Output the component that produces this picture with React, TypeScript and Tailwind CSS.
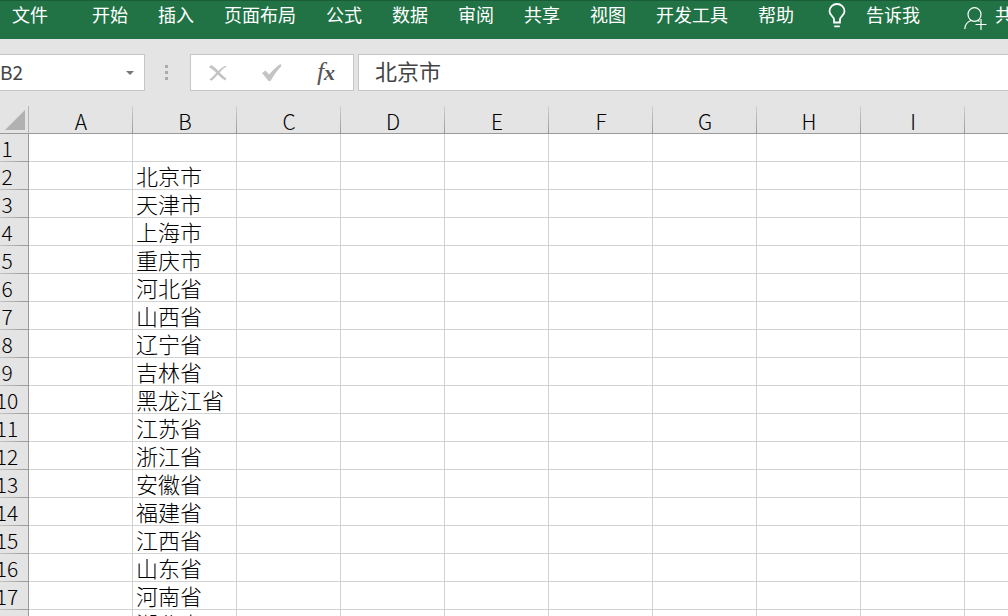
const TABS = [
  "开始",
  "插入",
  "页面布局",
  "公式",
  "数据",
  "审阅",
  "共享",
  "视图",
  "开发工具",
  "帮助",
];

const COLUMNS = ["A", "B", "C", "D", "E", "F", "G", "H", "I", ""];

const PROVINCES = [
  "",
  "北京市",
  "天津市",
  "上海市",
  "重庆市",
  "河北省",
  "山西省",
  "辽宁省",
  "吉林省",
  "黑龙江省",
  "江苏省",
  "浙江省",
  "安徽省",
  "福建省",
  "江西省",
  "山东省",
  "河南省",
  "湖北省",
];

export default function App() {
  return (
    <div className="flex h-screen flex-col overflow-hidden bg-[#e4e4e4] font-['Noto_Sans_CJK_SC',sans-serif] text-black">
      <Ribbon />
      <FormulaBar />
      <Sheet />
    </div>
  );
}

function Ribbon() {
  return (
    <nav className="flex h-[39px] shrink-0 items-start overflow-hidden border-t border-[#1a5c38] bg-[#217346] pl-3 text-[18px] leading-[26px] whitespace-nowrap text-white">
      <button className="mr-11 shrink-0">文件</button>
      <div className="flex shrink-0 gap-[30px]">
        {TABS.map((tab) => (
          <button key={tab}>{tab}</button>
        ))}
      </div>
      <button className="ml-[34px] flex shrink-0 gap-5">
        <BulbIcon />
        告诉我
      </button>
      <button className="ml-11 flex shrink-0 gap-2">
        <ShareIcon />
        共享
      </button>
    </nav>
  );
}

function FormulaBar() {
  return (
    <div className="mt-[15px] flex h-[37px] shrink-0 text-[#444]">
      <div className="flex w-[145px] shrink-0 items-center border border-l-0 border-[#c6c6c6] bg-white">
        <input
          aria-label="名称框"
          defaultValue="B2"
          className="min-w-0 flex-1 bg-transparent text-[19px] outline-none"
        />
        <button aria-label="展开名称框" className="px-[10px] py-3">
          <svg width="8" height="4" viewBox="0 0 8 4" fill="#777">
            <path d="M0 0H8L4 4Z" />
          </svg>
        </button>
      </div>
      <div className="flex w-[45px] shrink-0 items-center justify-center pr-[2px]">
        <svg width="3" height="15" viewBox="0 0 3 15" fill="#ababab">
          <path d="M0 0H3V3H0ZM0 6H3V9H0ZM0 12H3V15H0Z" />
        </svg>
      </div>
      <div className="mr-1 flex w-[164px] shrink-0 items-center border border-[#c6c6c6] bg-white">
        <button aria-label="取消" className="flex flex-1 justify-center">
          <svg width="18" height="16" viewBox="0 0 18 16" fill="#c4c4c4">
            <path d="M0 2.2 2 0C5 1.6 7.4 3.7 9.4 5.9 11.7 3.6 14.2 1.7 17 .8L17.6 1.6C15 3 12.7 5.2 10.8 7.5 12.9 9.8 15.2 11.9 17.6 13.5L16 15.4C13.2 13.8 10.9 11.7 8.9 9.5 6.8 11.9 4.9 14 2.7 15.8L.3 14.6C3 12.6 5.2 10.2 7.3 7.7 5.2 5.5 2.9 3.7 0 2.2Z" />
          </svg>
        </button>
        <button aria-label="输入" className="flex flex-1 justify-center">
          <svg width="20" height="17" viewBox="0 0 20 17" fill="#c4c4c4">
            <path d="M0 9 3.5 6.5 7.2 10.5C10.5 6.5 14 3 18.5 0L19.5 2C15.5 6 12 11 8.5 17H6.5Z" />
          </svg>
        </button>
        <button
          aria-label="插入函数"
          className="flex flex-1 items-baseline justify-center pb-px font-['Liberation_Serif',serif] text-[26px] leading-7 text-[#555] italic"
        >
          f<span className="text-[22px] font-bold">x</span>
        </button>
      </div>
      <input
        aria-label="编辑栏"
        defaultValue="北京市"
        className="min-w-0 flex-1 border border-r-0 border-[#c6c6c6] bg-white pb-1 pl-4 text-[22px] outline-none"
      />
    </div>
  );
}

function Sheet() {
  return (
    // the left edge of the row headers is scrolled out of view
    <div className="-ml-[14px] mt-[15px] min-h-0 flex-1 overflow-hidden">
      <table className="w-full table-fixed border-separate border-spacing-0 text-[22px] leading-[27px] font-light">
        <colgroup>
          <col className="w-[43px]" />
          {COLUMNS.map((name) => (
            <col key={name} className={name ? "w-[104px]" : ""} />
          ))}
        </colgroup>
        <thead>
          <tr className="h-7">
            <th className="border-r border-b border-[#999] border-r-[#b5b5b5] p-0">
              <svg className="mt-px mr-[3px] ml-auto" width="20" height="20" viewBox="0 0 20 20" fill="#b1b1b1">
                <path d="M20 0V20H0Z" />
              </svg>
            </th>
            {COLUMNS.map((name) => (
              <th
                key={name}
                className="h-7 border-b border-[#999] bg-[linear-gradient(to_bottom,#d0d0d0,#999)] bg-[length:1px_100%] bg-right bg-no-repeat p-0 pt-[3px] text-[21px] leading-6 font-light last:bg-none"
              >
                {name}
              </th>
            ))}
          </tr>
        </thead>
        <tbody>
          {PROVINCES.map((province, i) => (
            <tr key={i} className="h-7">
              <th className="h-7 border-r border-[#999] bg-[linear-gradient(to_right,#d8d8d8,#999)] bg-[length:100%_1px] bg-bottom bg-no-repeat p-0 text-[21px] leading-[27px] font-light">
                {i + 1}
              </th>
              {COLUMNS.map((name) => (
                <td
                  key={name}
                  className="h-7 border-r border-b border-[#d2d2d2] bg-white p-0 pl-[3px] whitespace-nowrap last:border-r-0"
                >
                  {name === "B" ? province : ""}
                </td>
              ))}
            </tr>
          ))}
        </tbody>
      </table>
    </div>
  );
}

function BulbIcon() {
  return (
    <svg className="mt-[2px]" width="18" height="25" viewBox="0 0 18 25" fill="none" stroke="white" strokeWidth="1.8">
      <path d="M6 18.5V16.5C6 13.5 1.5 12.5 1.5 8.3A7.5 7.3 0 0 1 16.5 8.3C16.5 12.5 12 13.5 12 16.5V18.5M5.2 19.5H12.8M6.2 23.3H11.8" />
    </svg>
  );
}

function ShareIcon() {
  return (
    <svg className="mt-[6px]" width="23" height="24" viewBox="0 0 23 24" fill="none" stroke="white" strokeWidth="1.2">
      <ellipse cx="10.5" cy="7.5" rx="6.5" ry="6.8" />
      <path d="M.8 22C1 17.5 3.5 14.8 7 13.5M14 13.5 15.5 14.5M17 12V23M11.5 17.5H22.5" />
    </svg>
  );
}
